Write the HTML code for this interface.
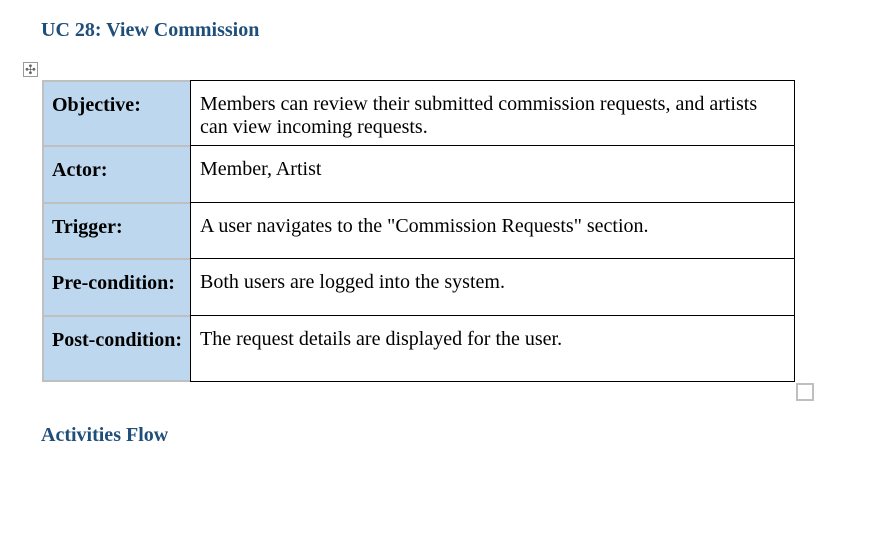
<!DOCTYPE html>
<html><head><style>
body{margin:0;width:876px;height:537px;background:#fff;position:relative;font-family:"Liberation Serif",serif;overflow:hidden}
.a{position:absolute}
h{position:absolute;color:#1f4e79;font-weight:bold;font-size:20px}
.l{position:absolute;left:42px;width:148px;background:#bdd7ee;border-left:2px solid #bfbfbf;border-top:2px solid #bfbfbf;font-weight:bold;font-size:20px;color:#000;box-sizing:border-box;padding:12px 0 0 8px;line-height:23px}
.r{position:absolute;left:190px;width:605px;border:1px solid #000;box-sizing:border-box;font-size:20px;padding:12px 20px 0 9px;line-height:23px}
</style></head><body>
<h style="left:41px;top:19px">UC 28: View Commission</h>
<div class="a" style="left:23px;top:62px;width:15px;height:15px;border:1px solid #999;box-sizing:border-box;font-size:13px;line-height:13px;text-align:center;color:#666">✣</div>

<div class="l" style="top:80px;height:66px">Objective:</div>
<div class="l" style="top:145px;height:58px">Actor:</div>
<div class="l" style="top:202px;height:57px">Trigger:</div>
<div class="l" style="top:258px;height:58px">Pre-condition:</div>
<div class="l" style="top:315px;height:67px;border-bottom:2px solid #bfbfbf">Post-condition:</div>

<div class="r" style="top:80px;height:66px">Members can review their submitted commission requests, and artists can view incoming requests.</div>
<div class="r" style="top:145px;height:58px">Member, Artist</div>
<div class="r" style="top:202px;height:57px">A user navigates to the "Commission Requests" section.</div>
<div class="r" style="top:258px;height:58px">Both users are logged into the system.</div>
<div class="r" style="top:315px;height:67px">The request details are displayed for the user.</div>

<div class="a" style="left:796px;top:383px;width:18px;height:18px;border:2px solid #bfbfbf;box-sizing:border-box"></div>
<h style="left:41px;top:424px">Activities Flow</h>
</body></html>
